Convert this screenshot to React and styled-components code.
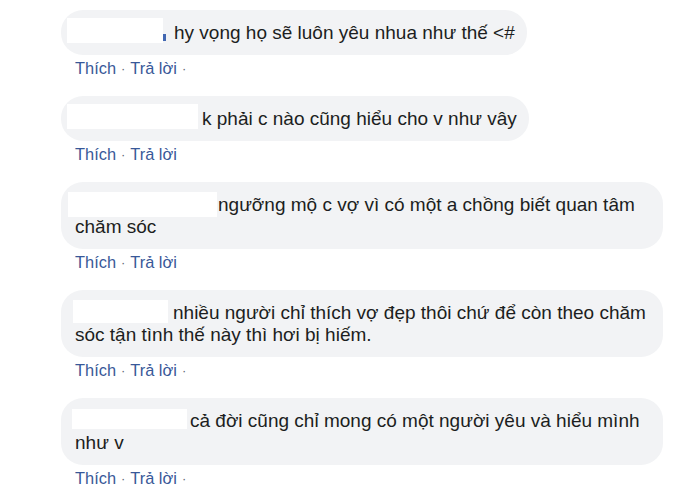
import React from "react";
import styled, { createGlobalStyle } from "styled-components";

const Global = createGlobalStyle`
  html, body { margin: 0; padding: 0; background: #ffffff; }
  body { font-family: "Liberation Sans", Arial, Helvetica, sans-serif; }
`;

const Page = styled.div`
  width: 699px;
  height: 491px;
  overflow: hidden;
  padding: 10px 0 0 61px;
  box-sizing: border-box;
  display: flex;
  flex-direction: column;
  align-items: flex-start;
`;

const Comment = styled.div`
  display: flex;
  flex-direction: column;
  align-items: flex-start;
  margin-bottom: 17px;
`;

const Bubble = styled.div`
  max-width: 602px;
  box-sizing: border-box;
  background: #f2f3f5;
  border-radius: 22px;
  padding: 12px 12px 11px 14px;
  color: #1c1e21;
  font-size: 19px;
  line-height: 22px;
`;

const Redact = styled.span`
  display: inline-block;
  vertical-align: middle;
  background: #ffffff;
  width: ${(p) => p.$w}px;
  height: ${(p) => p.$h}px;
  margin: -3px ${(p) => p.$mr}px -3px ${(p) => p.$ml}px;
  transform: translateY(${(p) => p.$dy}px);
`;

const NameTail = styled.span`
  display: inline-block;
  vertical-align: middle;
  width: 3px;
  height: 7px;
  background: #4267b2;
  margin-right: 8px;
  transform: translateY(4px);
`;

const Actions = styled.div`
  display: flex;
  align-items: center;
  gap: 5px;
  padding: 2px 0 0 14px;
  height: 22px;
  font-size: 16.4px;
  color: #385898;
`;

const Link = styled.span`
  color: #385898;
`;

const Dot = styled.span`
  color: #606770;
  font-size: 13px;
`;

const comments = [
  {
    text: "hy vọng họ sẽ luôn yêu nhua như thế <#",
    box: { w: 96, h: 25, ml: -8, mr: 0, dy: -3 },
    tail: true,
    trailing: true,
  },
  {
    text: "k phải c nào cũng hiểu cho v như vây",
    box: { w: 131, h: 25, ml: -8, mr: 4, dy: -3 },
  },
  {
    text: "ngưỡng mộ c vợ vì có một a chồng biết quan tâm chăm sóc",
    box: { w: 149, h: 25, ml: -7, mr: 1, dy: -1 },
  },
  {
    text: "nhiều người chỉ thích vợ đẹp thôi chứ để còn theo chăm sóc tận tình thế này thì hơi bị hiếm.",
    box: { w: 95, h: 23, ml: -2, mr: 5, dy: -2 },
    trailing: true,
  },
  {
    text: "cả đời cũng chỉ mong có một người yêu và hiểu mình như v",
    box: { w: 115, h: 20, ml: -3, mr: 3, dy: -3 },
    trailing: true,
  },
];

export default function App() {
  return (
    <>
      <Global />
      <Page>
        {comments.map((c, i) => (
          <Comment key={i}>
            <Bubble>
              <Redact $w={c.box.w} $h={c.box.h} $ml={c.box.ml} $mr={c.box.mr} $dy={c.box.dy} />
              {c.tail && <NameTail />}
              {c.text}
            </Bubble>
            <Actions>
              <Link>Thích</Link>
              <Dot>·</Dot>
              <Link>Trả lời</Link>
              {c.trailing && <Dot>·</Dot>}
            </Actions>
          </Comment>
        ))}
      </Page>
    </>
  );
}
